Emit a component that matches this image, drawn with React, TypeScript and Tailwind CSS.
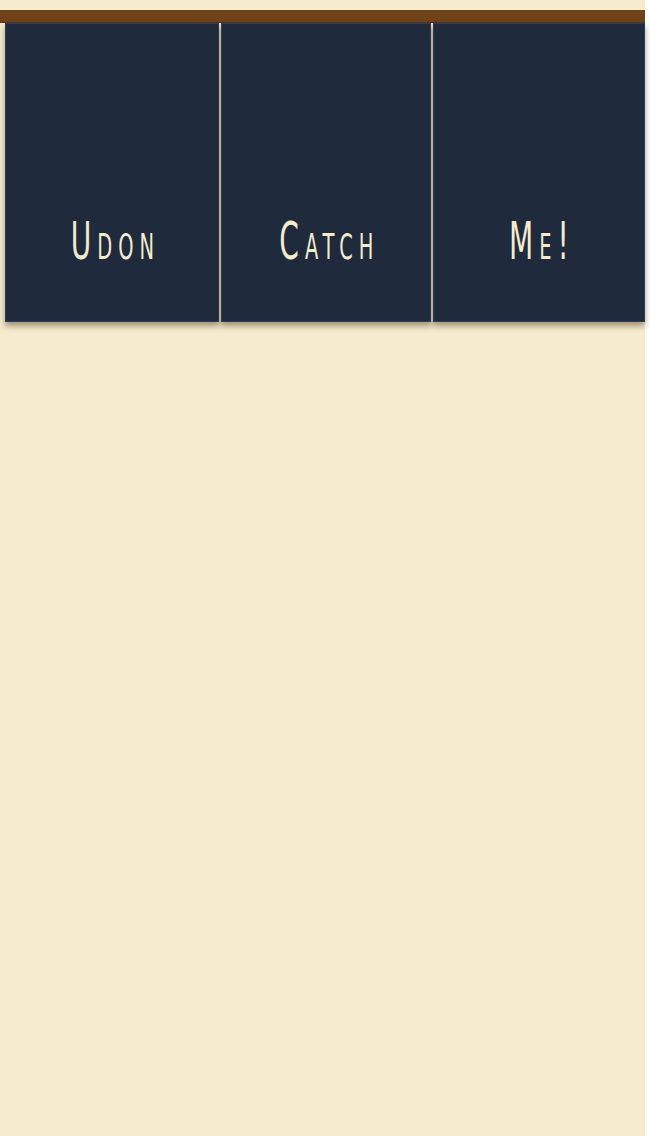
import React from 'react';

const tiles = ['Udon', 'Catch', 'Me!'];

const App = () => {
  return (
    <div className="w-[645px] min-h-[1136px] bg-[#f5ebcd]">
      <div className="h-[10px]" />
      <div className="h-[13px] bg-[#6f4219] border-b border-[#5a3413]" />
      <nav className="ml-[5px] grid grid-cols-[214px_210px_212px] gap-[2px]">
        {tiles.map((t) => (
          <div
            key={t}
            className="h-[299px] bg-[#1f2b3d] border border-[#2b3d58] shadow-[0_4px_6px_rgba(60,40,10,0.45)] flex items-end justify-center pb-[54px]"
          >
            <span
              className="inline-block scale-x-[0.6] text-[#f5ebcd] text-[52px] leading-none tracking-[10px] pl-[10px] [font-variant:small-caps] font-normal"
              style={{ fontFamily: '"Liberation Sans Narrow", "DejaVu Sans Condensed", sans-serif' }}
            >
              {t}
            </span>
          </div>
        ))}
      </nav>
    </div>
  );
};

export default App;
